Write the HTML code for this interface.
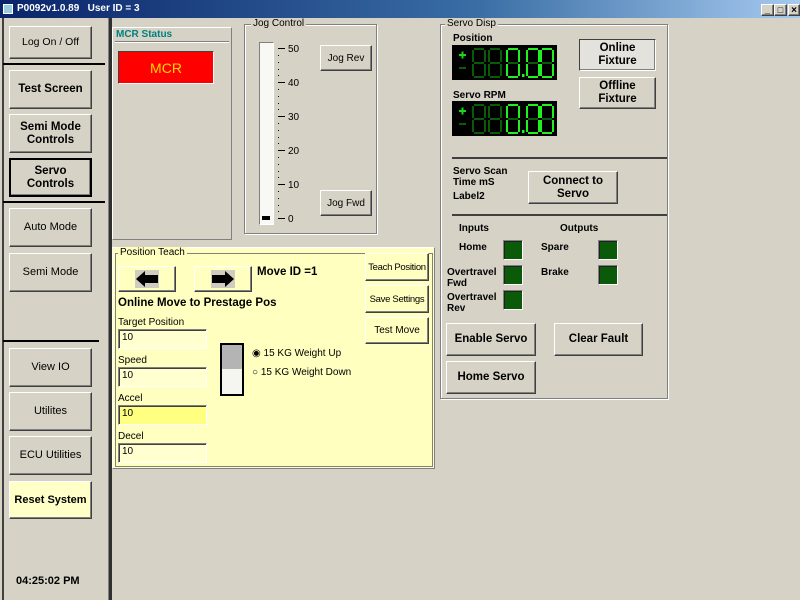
<!DOCTYPE html>
<html><head><style>
*{box-sizing:border-box;margin:0;padding:0}
body{width:800px;height:600px;background:#d6d2c6;font-family:"Liberation Sans",sans-serif;font-size:11px;color:#000;position:relative;overflow:hidden}
.a{position:absolute}
.btn{position:absolute;background:#d6d2c6;border:1px solid;border-color:#fff #404040 #404040 #fff;box-shadow:inset -1px -1px 0 #808080;display:flex;align-items:center;justify-content:center;text-align:center;line-height:13px;white-space:nowrap}
.b{font-weight:bold;font-size:11.5px}
.hl{position:absolute;height:2px;background:#000}
.grp{position:absolute;border:1px solid #808080;box-shadow:1px 1px 0 #fff, inset 1px 1px 0 #fff}
.gl{position:absolute;top:-7px;left:6px;padding:0 2px;font-size:10px}
.inp{position:absolute;border:1px solid;border-color:#808080 #fff #fff #808080;box-shadow:inset 1px 1px 0 #404040;font-size:10px;padding:2px 0 0 3px}
.led{position:absolute;width:20px;height:20px;background:#0a5a0a;border:1px solid;border-color:#808080 #fff #fff #808080;box-shadow:inset 1px 1px 0 #202020}
.lbl{position:absolute;font-weight:bold;font-size:10px;line-height:11px}
</style></head><body>
<div class="a" style="left:0;top:0;width:800px;height:18px;background:linear-gradient(90deg,#0a246a 0%,#3a6ea5 60%,#a6caf0 100%)"></div>
<div class="a" style="left:3px;top:4px;width:10px;height:10px;background:#9cd;border:1px solid #fff"></div>
<div class="a" style="left:17px;top:3px;color:#fff;font-weight:bold;font-size:10px">P0092v1.0.89 &nbsp; User ID = 3</div>
<div class="btn" style="left:761px;top:4px;width:13px;height:12px;font-size:9px;font-weight:bold">_</div>
<div class="btn" style="left:774px;top:4px;width:13px;height:12px;font-size:9px">□</div>
<div class="btn" style="left:788px;top:4px;width:12px;height:12px;font-size:10px;font-weight:bold">×</div>

<div class="a" style="left:2px;top:18px;width:2px;height:582px;background:#404040"></div>
<div class="a" style="left:108px;top:18px;width:1px;height:582px;background:#808080"></div>
<div class="a" style="left:109px;top:18px;width:3px;height:582px;background:#303030"></div>
<div class="btn" style="left:9px;top:26px;width:83px;height:33px;font-size:10.5px">Log On / Off</div>
<div class="hl" style="left:3px;top:63px;width:102px"></div>
<div class="btn b" style="left:9px;top:70px;width:83px;height:39px">Test Screen</div>
<div class="btn b" style="left:9px;top:114px;width:83px;height:39px">Semi Mode<br>Controls</div>
<div class="btn b" style="left:9px;top:158px;width:83px;height:39px;border:2px solid #000">Servo<br>Controls</div>
<div class="hl" style="left:3px;top:201px;width:102px"></div>
<div class="btn" style="left:9px;top:208px;width:83px;height:39px">Auto Mode</div>
<div class="btn" style="left:9px;top:253px;width:83px;height:39px">Semi Mode</div>
<div class="hl" style="left:3px;top:340px;width:96px"></div>
<div class="btn" style="left:9px;top:348px;width:83px;height:39px">View IO</div>
<div class="btn" style="left:9px;top:392px;width:83px;height:39px">Utilites</div>
<div class="btn" style="left:9px;top:436px;width:83px;height:39px">ECU Utilities</div>
<div class="btn b" style="left:9px;top:481px;width:83px;height:38px;background:#ffffc8;font-size:11px">Reset System</div>
<div class="a" style="left:16px;top:575px;font-weight:bold;font-size:11px">04:25:02 PM</div>

<div class="a" style="left:112px;top:27px;width:120px;height:213px;border:1px solid;border-color:#fff #808080 #808080 #fff"></div>
<div class="a" style="left:116px;top:29px;color:#008080;font-weight:bold;font-size:10px">MCR Status</div>
<div class="a" style="left:115px;top:41px;width:114px;height:2px;border-top:1px solid #808080;border-bottom:1px solid #fff"></div>
<div class="a" style="left:118px;top:51px;width:96px;height:33px;background:#f00;border:1px solid;border-color:#404040 #fff #fff #404040;color:#ffd800;font-size:14px;display:flex;align-items:center;justify-content:center">MCR</div>

<div class="grp" style="left:244px;top:24px;width:133px;height:210px"><div class="gl" style="background:#d6d2c6">Jog Control</div></div>
<div class="a" style="left:259px;top:42px;width:15px;height:183px;background:#f8f8f4;border:1px solid;border-color:#808080 #fff #fff #808080"></div>
<div class="a" style="left:262px;top:216px;width:8px;height:4px;background:#000"></div>
<svg class="a" style="left:276px;top:40px" width="40" height="186">
<g stroke="#000" stroke-width="1">
<line x1="2" y1="8.5" x2="9" y2="8.5"/><line x1="2" y1="42.5" x2="9" y2="42.5"/><line x1="2" y1="76.5" x2="9" y2="76.5"/><line x1="2" y1="110.5" x2="9" y2="110.5"/><line x1="2" y1="144.5" x2="9" y2="144.5"/><line x1="2" y1="178.5" x2="9" y2="178.5"/>
</g>
<g fill="#000"><rect x="2" y="15" width="1" height="1"/><rect x="2" y="22" width="1" height="1"/><rect x="2" y="29" width="1" height="1"/><rect x="2" y="35" width="1" height="1"/><rect x="2" y="49" width="1" height="1"/><rect x="2" y="56" width="1" height="1"/><rect x="2" y="63" width="1" height="1"/><rect x="2" y="69" width="1" height="1"/><rect x="2" y="83" width="1" height="1"/><rect x="2" y="90" width="1" height="1"/><rect x="2" y="97" width="1" height="1"/><rect x="2" y="103" width="1" height="1"/><rect x="2" y="117" width="1" height="1"/><rect x="2" y="124" width="1" height="1"/><rect x="2" y="131" width="1" height="1"/><rect x="2" y="137" width="1" height="1"/><rect x="2" y="151" width="1" height="1"/><rect x="2" y="158" width="1" height="1"/><rect x="2" y="165" width="1" height="1"/><rect x="2" y="171" width="1" height="1"/></g>
<g font-family="Liberation Sans" font-size="10"><text x="12" y="12">50</text><text x="12" y="46">40</text><text x="12" y="80">30</text><text x="12" y="114">20</text><text x="12" y="148">10</text><text x="12" y="182">0</text></g>
</svg>
<div class="btn" style="left:320px;top:45px;width:52px;height:26px;font-size:10px">Jog Rev</div>
<div class="btn" style="left:320px;top:190px;width:52px;height:26px;font-size:10px">Jog Fwd</div>

<div class="a" style="left:112px;top:247px;width:323px;height:222px;background:#ffffc0;border:1px solid;border-color:#fff #808080 #808080 #fff"></div>
<div class="grp" style="left:115px;top:253px;width:318px;height:214px;box-shadow:none"><div class="gl" style="background:#ffffc0;left:2px">Position Teach</div></div>
<div class="btn" style="left:118px;top:266px;width:58px;height:26px;background:#ffffc0"><svg width="24" height="18"><rect x="0" y="0" width="24" height="18" fill="#d0ccc0"/><path d="M1 9 L10 1 L10 5 L23 5 L23 13 L10 13 L10 17 Z" fill="#000"/></svg></div>
<div class="btn" style="left:194px;top:266px;width:58px;height:26px;background:#ffffc0"><svg width="24" height="18"><rect x="0" y="0" width="24" height="18" fill="#d0ccc0"/><path d="M23 9 L14 1 L14 5 L1 5 L1 13 L14 13 L14 17 Z" fill="#000"/></svg></div>
<div class="a b" style="left:257px;top:266px">Move ID =1</div>
<div class="btn" style="left:365px;top:253px;width:64px;height:28px;font-size:9.5px;letter-spacing:-0.3px;background:#ffffc0">Teach Position</div>
<div class="btn" style="left:365px;top:285px;width:64px;height:28px;font-size:9.5px;letter-spacing:-0.3px;background:#ffffc0">Save Settings</div>
<div class="btn" style="left:365px;top:317px;width:64px;height:27px;font-size:10px;background:#ffffc0">Test Move</div>
<div class="a b" style="left:118px;top:297px">Online Move to Prestage Pos</div>
<div class="a" style="left:118px;top:317px;font-size:10px">Target Position</div>
<div class="inp" style="left:118px;top:329px;width:89px;height:20px;background:#ffffd0">10</div>
<div class="a" style="left:118px;top:355px;font-size:10px">Speed</div>
<div class="inp" style="left:118px;top:367px;width:89px;height:20px;background:#ffffd0">10</div>
<div class="a" style="left:118px;top:393px;font-size:10px">Accel</div>
<div class="inp" style="left:118px;top:405px;width:89px;height:20px;background:#ffff80">10</div>
<div class="a" style="left:118px;top:431px;font-size:10px">Decel</div>
<div class="inp" style="left:118px;top:443px;width:89px;height:20px;background:#ffffd0">10</div>
<div class="a" style="left:220px;top:343px;width:24px;height:53px;border:2px solid #000;background:#f6f6f0"><div style="height:24px;background:#b4b4b4"></div></div>
<div class="a" style="left:252px;top:348px;font-size:10px">◉ 15 KG Weight Up</div>
<div class="a" style="left:252px;top:367px;font-size:10px">○ 15 KG Weight Down</div>

<div class="grp" style="left:440px;top:24px;width:228px;height:375px"><div class="gl" style="background:#d6d2c6;left:4px">Servo Disp</div></div>
<div class="lbl" style="left:453px;top:33px">Position</div>
<div class="lbl" style="left:453px;top:90px">Servo RPM</div>
<svg width="0" height="0" style="position:absolute"><defs>
<g id="d8"><rect x="2" y="0" width="10" height="2"/><rect x="0" y="2" width="2" height="12"/><rect x="12" y="2" width="2" height="12"/><rect x="2" y="14" width="10" height="2"/><rect x="0" y="16" width="2" height="12"/><rect x="12" y="16" width="2" height="12"/><rect x="2" y="28" width="10" height="2"/></g>
<g id="d0"><rect x="2" y="0" width="10" height="2"/><rect x="0" y="2" width="2" height="12"/><rect x="12" y="2" width="2" height="12"/><rect x="0" y="16" width="2" height="12"/><rect x="12" y="16" width="2" height="12"/><rect x="2" y="28" width="10" height="2"/></g>
<g id="disp"><rect width="105" height="35" fill="#000"/><g fill="#18d818"><rect x="7" y="9" width="7" height="2"/><rect x="9.5" y="6.5" width="2" height="7"/></g><rect x="7" y="22" width="7" height="2" fill="#0a5a0a"/>
<g fill="#0a5a0a" transform="translate(20,3)"><use href="#d8"/></g><g fill="#0a5a0a" transform="translate(36,3)"><use href="#d8"/></g>
<g fill="#0a5a0a" transform="translate(54,3)"><use href="#d8"/></g><g fill="#20f020" transform="translate(54,3)"><use href="#d0"/></g>
<rect x="70" y="29" width="2.5" height="3" fill="#20f020"/>
<g fill="#0a5a0a" transform="translate(74,3)"><use href="#d8"/></g><g fill="#20f020" transform="translate(74,3)"><use href="#d0"/></g>
<g fill="#0a5a0a" transform="translate(88,3)"><use href="#d8"/></g><g fill="#20f020" transform="translate(88,3)"><use href="#d0"/></g></g>
</defs></svg>
<svg class="a" style="left:452px;top:45px" width="106" height="36"><use href="#disp"/></svg>
<svg class="a" style="left:452px;top:101px" width="106" height="36"><use href="#disp"/></svg>
<div class="btn b" style="left:579px;top:39px;width:77px;height:32px;border-color:#404040 #fff #fff #404040;background:#e4e2dc">Online<br>Fixture</div>
<div class="btn b" style="left:579px;top:77px;width:77px;height:32px">Offline<br>Fixture</div>
<div class="a" style="left:452px;top:157px;width:215px;height:2px;background:#404040"></div>
<div class="lbl" style="left:453px;top:166px">Servo Scan<br>Time mS</div>
<div class="lbl" style="left:453px;top:191px">Label2</div>
<div class="btn b" style="left:528px;top:171px;width:90px;height:33px">Connect to<br>Servo</div>
<div class="a" style="left:452px;top:214px;width:215px;height:2px;background:#404040"></div>
<div class="lbl" style="left:459px;top:223px">Inputs</div>
<div class="lbl" style="left:560px;top:223px">Outputs</div>
<div class="lbl" style="left:459px;top:242px">Home</div>
<div class="lbl" style="left:447px;top:267px">Overtravel<br>Fwd</div>
<div class="lbl" style="left:447px;top:292px">Overtravel<br>Rev</div>
<div class="lbl" style="left:541px;top:242px">Spare</div>
<div class="lbl" style="left:541px;top:267px">Brake</div>
<div class="led" style="left:503px;top:240px"></div>
<div class="led" style="left:503px;top:265px"></div>
<div class="led" style="left:503px;top:290px"></div>
<div class="led" style="left:598px;top:240px"></div>
<div class="led" style="left:598px;top:265px"></div>
<div class="btn b" style="left:446px;top:323px;width:90px;height:33px">Enable Servo</div>
<div class="btn b" style="left:554px;top:323px;width:89px;height:33px">Clear Fault</div>
<div class="btn b" style="left:446px;top:361px;width:90px;height:33px">Home Servo</div>
</body></html>
